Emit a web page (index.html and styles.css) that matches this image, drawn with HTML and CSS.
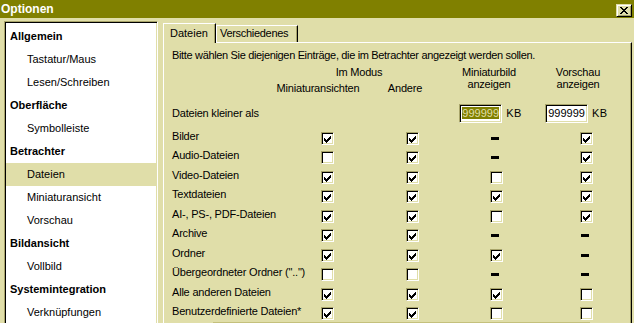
FILE: index.html
```html
<!DOCTYPE html>
<html lang="de">
<head>
<meta charset="utf-8">
<title>Optionen</title>
<link rel="stylesheet" href="styles.css">
</head>
<body>
<div class="window">
  <div class="titlebar">
    <span class="title">Optionen</span>
    <span class="close-btn"><svg width="8" height="7" viewBox="0 0 8 7" shape-rendering="crispEdges"><path fill="#000" d="M0 0h2v1h-2z M6 0h2v1h-2z M1 1h2v1h-2z M5 1h2v1h-2z M2 2h4v1h-4z M3 3h2v1h-2z M2 4h4v1h-4z M1 5h2v1h-2z M5 5h2v1h-2z M0 6h2v1h-2z M6 6h2v1h-2z"/></svg></span>
  </div>
  <div class="main">
    <div class="tree">
      <div class="tree-item head">Allgemein</div>
      <div class="tree-item">Tastatur/Maus</div>
      <div class="tree-item">Lesen/Schreiben</div>
      <div class="tree-item head">Oberfläche</div>
      <div class="tree-item">Symbolleiste</div>
      <div class="tree-item head">Betrachter</div>
      <div class="tree-item selected">Dateien</div>
      <div class="tree-item">Miniaturansicht</div>
      <div class="tree-item">Vorschau</div>
      <div class="tree-item head">Bildansicht</div>
      <div class="tree-item">Vollbild</div>
      <div class="tree-item head">Systemintegration</div>
      <div class="tree-item">Verknüpfungen</div>
    </div>
    <div class="tabarea">
      <div class="tabs">
        <div class="tab active">Dateien</div>
        <div class="tab">Verschiedenes</div>
      </div>
      <div class="page">
        <p class="intro">Bitte wählen Sie diejenigen Einträge, die im Betrachter angezeigt werden sollen.</p>
        <div class="colhead">
          <div class="mode">
            <div class="mode-title">Im Modus</div>
            <div class="mode-sub"><span>Miniaturansichten</span><span>Andere</span></div>
          </div>
          <div class="twoline">Miniaturbild<br>anzeigen</div>
          <div class="twoline">Vorschau<br>anzeigen</div>
        </div>
        <div class="sizerow">
          <span class="sizelabel">Dateien kleiner als</span>
          <span class="field"><span class="sel">999999</span></span><span class="unit">KB</span>
          <span class="field">999999</span><span class="unit">KB</span>
        </div>
        <div class="rows">
          <div class="row"><span class="lbl">Bilder</span><span class="cb on"></span><span class="cb on"></span><span class="dash"></span><span class="cb on"></span></div>
          <div class="row"><span class="lbl">Audio-Dateien</span><span class="cb"></span><span class="cb on"></span><span class="dash"></span><span class="cb on"></span></div>
          <div class="row"><span class="lbl">Video-Dateien</span><span class="cb on"></span><span class="cb on"></span><span class="cb"></span><span class="cb on"></span></div>
          <div class="row"><span class="lbl">Textdateien</span><span class="cb on"></span><span class="cb on"></span><span class="cb on"></span><span class="cb on"></span></div>
          <div class="row"><span class="lbl">AI-, PS-, PDF-Dateien</span><span class="cb on"></span><span class="cb on"></span><span class="cb"></span><span class="cb on"></span></div>
          <div class="row"><span class="lbl">Archive</span><span class="cb on"></span><span class="cb on"></span><span class="dash"></span><span class="dash"></span></div>
          <div class="row"><span class="lbl">Ordner</span><span class="cb on"></span><span class="cb on"></span><span class="cb on"></span><span class="dash"></span></div>
          <div class="row"><span class="lbl">Übergeordneter Ordner ("..")</span><span class="cb"></span><span class="cb"></span><span class="dash"></span><span class="dash"></span></div>
          <div class="row"><span class="lbl">Alle anderen Dateien</span><span class="cb on"></span><span class="cb on"></span><span class="cb on"></span><span class="cb"></span></div>
          <div class="row"><span class="lbl">Benutzerdefinierte Dateien*</span><span class="cb on"></span><span class="cb on"></span><span class="cb"></span><span class="cb"></span></div>
        </div>
      </div>
    </div>
  </div>
</div>
</body>
</html>
```
FILE: styles.css
```css
html, body {
  margin: 0;
  padding: 0;
}
body {
  background: #e0dea9;
  font-family: "Liberation Sans", Arial, sans-serif;
  font-size: 11px;
  color: #000;
}
.window {
  width: 634px;
  height: 323px;
  overflow: hidden;
  background: #e0dea9;
}
.titlebar {
  height: 18px;
  background: #808000;
  display: flex;
  justify-content: space-between;
  align-items: flex-start;
  padding: 0 2px 0 1px;
}
.title {
  color: #fff;
  font-weight: bold;
  font-size: 12px;
  line-height: 18px;
}
.close-btn {
  margin-top: 4px;
  width: 16px;
  height: 13px;
  box-sizing: border-box;
  border: 1px solid;
  border-color: #e0dea9 #000 #000 #e0dea9;
  box-shadow: inset 1px 1px 0 #fff, inset -1px -1px 0 #a8a46a;
  background: #e0dea9;
  display: flex;
  align-items: center;
  justify-content: center;
}
.close-btn svg {
  display: block;
}
.main {
  display: flex;
  align-items: flex-start;
}
.tree {
  margin: 3px 0 0 4px;
  width: 154px;
  height: 320px;
  box-sizing: border-box;
  border: 1px solid;
  border-color: #a8a46a #fff #fff #a8a46a;
  box-shadow: inset 1px 1px 0 #000, inset -1px -1px 0 #e0dea9;
  background: #fff;
  padding: 3px 1px 0 1px;
}
.tree-item {
  height: 23px;
  line-height: 23px;
  padding-left: 21px;
  white-space: nowrap;
}
.tree-item.head {
  font-weight: bold;
  padding-left: 4px;
}
.tree-item.selected {
  background: #e0dea9;
}
.tabarea {
  margin: 5px 0 0 5px;
  width: 469px;
}
.tabs {
  display: flex;
  align-items: flex-start;
  height: 19px;
}
.tab {
  box-sizing: border-box;
  margin-top: 2px;
  width: 82px;
  height: 17px;
  line-height: 14px;
  padding-left: 3px;
  border-top: 1px solid #fff;
  border-left: 1px solid #fff;
  border-right: 1px solid #000;
  box-shadow: inset -1px 0 0 #a8a46a;
  background: #e0dea9;
  letter-spacing: -0.3px;
  white-space: nowrap;
}
.tab.active {
  margin-top: 0;
  width: 53px;
  height: 20px;
  line-height: 18px;
  padding-left: 6px;
  position: relative;
  z-index: 1;
  letter-spacing: 0;
}
.page {
  height: 290px;
  box-sizing: border-box;
  border-top: 1px solid #fff;
  border-left: 1px solid #fff;
  border-right: 1px solid #000;
  box-shadow: inset -1px 0 0 #a8a46a;
  padding: 5px 0 0 8px;
  overflow: hidden;
  letter-spacing: -0.2px;
}
.intro {
  margin: 0;
  line-height: 14px;
  white-space: nowrap;
  letter-spacing: -0.34px;
}
.colhead {
  margin-top: 4px;
  display: grid;
  grid-template-columns: 100px 174px 86px 92px;
  line-height: 12px;
  height: 28px;
}
.mode {
  grid-column: 2;
}
.mode-title {
  text-align: center;
}
.mode-sub {
  margin-top: 4px;
  display: grid;
  grid-template-columns: 92px 82px;
  text-align: center;
}
.twoline {
  text-align: center;
}
.sizerow {
  margin-top: 10px;
  display: flex;
  height: 19px;
  line-height: 19px;
}
.sizelabel {
  width: 288px;
}
.field {
  box-sizing: border-box;
  width: 43px;
  height: 19px;
  border: 1px solid;
  border-color: #a8a46a #fff #fff #a8a46a;
  box-shadow: inset 1px 1px 0 #000, inset -1px -1px 0 #e0dea9;
  background: #fff;
  padding-left: 2px;
  line-height: 17px;
  overflow: hidden;
  white-space: nowrap;
  letter-spacing: 0;
}
.sel {
  background: #808000;
  color: #e0dea9;
}
.unit {
  width: 43px;
  box-sizing: border-box;
  padding-left: 4px;
  letter-spacing: 0.3px;
}
.rows {
  margin-top: 6px;
  position: relative;
}
.rows::after {
  content: "";
  position: absolute;
  top: 193px;
  left: 41px;
  width: 377px;
  height: 1px;
  background: #c4c07c;
}
.row {
  display: grid;
  grid-template-columns: 149px 85px 84px 90px 1fr;
  align-items: start;
  height: 19.45px;
}
.lbl {
  line-height: 14px;
  white-space: nowrap;
}
.cb {
  display: block;
  margin-top: 3px;
  width: 13px;
  height: 13px;
  box-sizing: border-box;
  border: 1px solid;
  border-color: #a8a46a #fff #fff #a8a46a;
  box-shadow: inset 1px 1px 0 #000, inset -1px -1px 0 #e0dea9;
  background: #fff;
  padding: 1px;
}
.cb.on::after {
  content: "";
  display: block;
  width: 1px;
  height: 3px;
  margin: 4px 0 0 1px;
  background: #000;
  box-shadow: 1px 1px 0 #000, 2px 2px 0 #000, 3px 1px 0 #000, 4px 0 0 #000, 5px -1px 0 #000, 6px -2px 0 #000;
}
.dash {
  display: block;
  margin: 8px 0 0 1px;
  width: 8px;
  height: 3px;
  background: #000;
}
```
